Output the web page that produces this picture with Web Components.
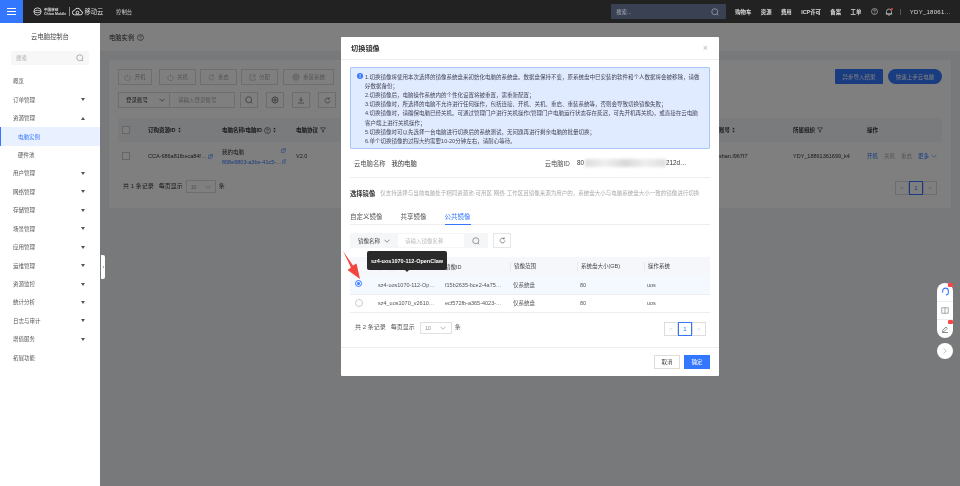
<!DOCTYPE html>
<html lang="zh-CN">
<head>
<meta charset="utf-8">
<title>切换镜像</title>
<style>
html, body { margin: 0; height: 100%; overflow: hidden; }
body { width: 960px; height: 486px; display: flex; flex-direction: column; font-family: "Liberation Sans", "Noto Sans CJK SC", sans-serif; color: #333; filter: blur(.2px); white-space: nowrap; }
.below { flex: 1; display: flex; min-height: 0; position: relative; }
</style>
</head>
<body>
<app-header></app-header>
<div class="below">
  <side-nav></side-nav>
  <instance-page></instance-page>
  <switch-image-dialog></switch-image-dialog>
  <float-tools></float-tools>
  <nav-handle></nav-handle>
</div>
<script>
(function() {
  'use strict';
  const icons = {
    search: '<svg width="8" height="8" viewBox="0 0 16 16" fill="none" stroke="currentColor" stroke-width="1.3"><circle cx="7.5" cy="7.5" r="6"/><path d="M12 12l2.5 2.5"/></svg>',
    chevron: '<svg width="6" height="4" viewBox="0 0 12 8" fill="none" stroke="currentColor" stroke-width="1.2"><path d="M1 1.5l5 5 5-5"/></svg>',
    caret: '<svg width="4" height="3" viewBox="0 0 8 6" fill="currentColor"><path d="M0 0h8L4 6z"/></svg>',
    power: '<svg width="7" height="7" viewBox="0 0 16 16" fill="none" stroke="currentColor" stroke-width="1.3"><path d="M5 3.2a6.3 6.3 0 1 0 6 0M8 1v6"/></svg>',
    share: '<svg width="7" height="7" viewBox="0 0 16 16" fill="none" stroke="currentColor" stroke-width="1.3"><path d="M8 2H2v12h12V8M7 9l7-7M10 2h4v4"/></svg>',
    restart: '<svg width="7" height="7" viewBox="0 0 16 16" fill="none" stroke="currentColor" stroke-width="1.3"><path d="M13.5 8a5.5 5.5 0 1 1-1.8-4M12 1v3.3H8.7"/></svg>',
    gear: '<svg width="8" height="8" viewBox="0 0 16 16" fill="none" stroke="currentColor" stroke-width="1.6"><circle cx="8" cy="8" r="2.3"/><path d="M8 1.5l5.6 3.2v6.6L8 14.5l-5.6-3.2V4.7z"/></svg>',
    download: '<svg width="8" height="8" viewBox="0 0 16 16" fill="none" stroke="currentColor" stroke-width="1.3"><path d="M8 2v8M4.5 7L8 10.5 11.5 7M2 14h12"/></svg>',
    copy: '<svg width="5" height="5" viewBox="0 0 12 12" fill="none" stroke="currentColor" stroke-width="1.3"><path d="M4 1h7v7M1 4h6.5v7H1z"/></svg>',
    sort: '<svg width="3" height="6" viewBox="0 0 6 12" fill="currentColor"><path d="M3 1l2.5 3.5h-5zM3 11L.5 7.5h5z"/></svg>',
    filter: '<svg width="6" height="6" viewBox="0 0 12 12" fill="none" stroke="currentColor" stroke-width="1.1"><path d="M1 1.5h10L7 6.5v4l-2-1v-3z"/></svg>',
    help: '<svg width="7" height="7" viewBox="0 0 16 16" fill="none" stroke="currentColor" stroke-width="1.3"><circle cx="8" cy="8" r="6.8"/><path d="M6 6.3a2 2 0 1 1 3 1.7c-.7.4-1 .8-1 1.6M8 11.2v1.3"/></svg>'
  };

  const define = (name, css, html) => customElements.define(name, class extends HTMLElement {
    constructor() {
      super();
      this.attachShadow({mode: 'open'}).innerHTML = `<style>${css}</style>${html}`;
    }
  });

  define('app-header', `
    :host { display: flex; align-items: center; height: 23px; background: #222; color: #d8d8d8; font-size: 5.4px; flex: none; }
    .burger { width: 23px; height: 23px; flex: none; background: #37f; display: flex; flex-direction: column; justify-content: center; align-items: center; gap: 2px; }
    .burger i { width: 9px; height: 1px; background: #fff; }
    .logo { margin-left: 10px; display: flex; align-items: center; color: #ddd; width: 83px; flex: none; }
    .logo b { font-weight: 400; }
    .cm { font-size: 3.6px; line-height: 4px; margin: 0 1px 0 2px; font-weight: 600; }
    .sep { width: 1px; height: 9px; background: #888; margin: 0 2px; }
    .yun { font-size: 6.3px; margin-left: 1px; }
    .console { color: #ccc; flex: none; }
    .search { margin-left: 479px; width: 115px; height: 15px; background: #3a4152; border-radius: 1px; display: flex; align-items: center; justify-content: space-between; padding: 0 7px 0 5px; box-sizing: border-box; color: #aeb4c0; flex: none; }
    nav { display: flex; align-items: center; margin-left: 9px; color: #ddd; gap: 9.4px; font-weight: 600; flex: none; }
    .dot { position: relative; display: flex; }
    .dot::after { content: ''; position: absolute; right: 0; top: 0; width: 2px; height: 2px; border-radius: 50%; background: #f33; }
    .bar { width: 1px; height: 6px; background: #555; margin-left: -2px; }
    .user { margin-left: -1px; font-size: 6px; letter-spacing: .25px; font-weight: 400; }
  `, `
    <div class="burger"><i></i><i></i><i></i></div>
    <div class="logo">
      <svg width="9" height="9" viewBox="0 0 16 16" fill="none" stroke="#ddd" stroke-width="1.5"><circle cx="8" cy="8" r="6.5"/><path d="M2 8c3-3 9-3 12 0M2 8c3 3 9 3 12 0"/></svg>
      <span class="cm">中国移动<br>China Mobile</span><span class="sep"></span>
      <svg width="11" height="9" viewBox="0 0 20 16" fill="none" stroke="#ddd" stroke-width="1.8"><path d="M5 14a4 4 0 0 1-.5-8A6 6 0 0 1 16 7a3.5 3.5 0 0 1-1 7z"/><circle cx="10" cy="10" r="2.5"/></svg>
      <b class="yun">移动云</b>
    </div>
    <span class="console">控制台</span>
    <div class="search"><span>搜索...</span>${icons.search}</div>
    <nav>
      <span>购物车</span><span>资源</span><span>费用</span><span>ICP许可</span><span>备案</span><span>工单</span>
      <span style="display:flex">${icons.help}</span>
      <span class="dot" style="margin-left:-2px"><svg width="8" height="8" viewBox="0 0 16 16" fill="none" stroke="currentColor" stroke-width="1.3"><path d="M3 12V7a5 5 0 0 1 10 0v5zM1.5 12h13M6.5 14.5h3"/></svg></span>
      <span class="bar"></span><span class="user">YDY_18061…</span>
    </nav>
  `);

  const navRows = [['概览', 0], ['订单管理', 1], ['资源管理', 2], ['电脑实例', 3], ['硬件池', 4], ['用户管理', 1], ['网络管理', 1], ['存储管理', 1], ['场景管理', 1], ['应用管理', 1], ['运维管理', 1], ['资源监控', 1], ['统计分析', 1], ['日志与审计', 1], ['增值服务', 1], ['拓展功能', 0]];
  define('side-nav', `
    :host { display: block; width: 100px; flex: none; background: #fff; color: #555; font-size: 5.5px; }
    h1 { margin: 0; padding-top: 10px; box-sizing: border-box; line-height: 8px; text-align: center; font-weight: 400; font-size: 6.3px; color: #444; height: 28px; }
    .search { margin: 0 11px 7px; height: 14px; background: #f7f7f7; display: flex; align-items: center; justify-content: space-between; padding: 0 5px; color: #aaa; }
    .search svg { color: #888; }
    .row { height: 18.45px; display: flex; align-items: center; justify-content: space-between; padding: 0 15px 0 13px; box-sizing: border-box; }
    .row svg { color: #555; }
    .row.sub { padding-left: 18px; }
    .row.on { background: #e9f0ff; color: #37f; border-left: 1px solid #37f; padding-left: 17px; }
    .up svg { transform: rotate(180deg); }
  `, `
    <h1>云电脑控制台</h1>
    <div class="search"><span>搜索</span>${icons.search}</div>
    ${navRows.map(([t, k]) => `<div class="row${k === 3 ? ' sub on' : k === 4 ? ' sub' : k === 2 ? ' up' : ''}"><span>${t}</span>${k === 1 || k === 2 ? icons.caret : ''}</div>`).join('')}
  `);

  define('instance-page', `
    :host { display: block; flex: 1; background: #f0f2f5; font-size: 5.5px; color: #333; min-width: 0; }
    .crumb { height: 28px; background: #fff; display: flex; align-items: center; gap: 3px; padding-left: 9px; font-size: 6.3px; }
    .card { margin: 9px 9px 0; height: 148px; background: #fff; padding: 9px; box-sizing: border-box; }
    .tools { display: flex; height: 16px; justify-content: space-between; }
    .btns { display: flex; gap: 4px; }
    .btn { border: .5px solid #ddd; display: flex; align-items: center; justify-content: center; gap: 3px; box-sizing: border-box; color: #aaa; height: 16px; }
    .go { background: #37f; color: #fff; height: 15px; display: flex; align-items: center; justify-content: center; }
    .filter { display: flex; margin-top: 7px; height: 16px; }
    .sel { width: 51px; border: .5px solid #ddd; border-right: 0; display: flex; align-items: center; justify-content: space-between; padding: 0 4px 0 7px; box-sizing: border-box; }
    .inp { width: 66px; border: .5px solid #ddd; padding-left: 8px; box-sizing: border-box; line-height: 15px; color: #aaa; }
    .sq { width: 18px; border: .5px solid #ddd; display: flex; align-items: center; justify-content: center; box-sizing: border-box; color: #555; }
    .head, .row { display: grid; grid-template-columns: 30px 74px 74px 423px 74px 74px 1fr; align-items: center; }
    .head { margin-top: 10px; height: 24px; background: #f5f7fa; font-weight: 600; }
    .head span, .row > span { display: flex; align-items: center; gap: 2px; white-space: nowrap; }
    .row { height: 28px; }
    .box { width: 6px; height: 6px; border: .5px solid #ccc; margin-left: 4px; background: #fff; }
    .blue { color: #37f; }
    .two { flex-direction: column; align-items: flex-start !important; gap: 3px !important; }
    .two div { display: flex; width: 64px; justify-content: space-between; }
    .pager { display: flex; align-items: flex-start; line-height: 12px; margin: 10px 0 0 5px; gap: 3px; font-size: 6px; }
    .psel { width: 30px; height: 13px; border: .5px solid #ddd; display: flex; align-items: center; justify-content: space-around; box-sizing: border-box; font-size: 5px; color: #999; }
    .pages { margin: 1px 5px 0 auto; display: flex; color: #bbb; }
    .pages span { width: 14px; height: 14px; border: .5px solid #ddd; display: flex; align-items: center; justify-content: center; box-sizing: border-box; }
    .pages .cur { border: 1px solid #37f; color: #37f; font-size: 6px; }
  `, `
    <div class="crumb">电脑实例 ${icons.help}</div>
    <div class="card">
      <div class="tools">
        <div class="btns">
          <span class="btn" style="width:34px">${icons.power}开机</span>
          <span class="btn" style="width:37px;margin-left:3px">${icons.power}关机</span>
          <span class="btn" style="width:37px">${icons.restart}重启</span>
          <span class="btn" style="width:37px">${icons.share}分配</span>
          <span class="btn" style="width:51px;margin-left:1px">${icons.gear}重装系统</span>
        </div>
        <div class="btns" style="gap:5px">
          <span class="go" style="width:48px;border-radius:1px">异步导入结果</span>
          <span class="go" style="width:54px;border-radius:8px">快速上手云电脑</span>
        </div>
      </div>
      <div class="filter">
        <span class="sel">登录账号 ${icons.chevron}</span><span class="inp">请输入登录账号</span>
        <span class="sq" style="margin-left:5px">${icons.search}</span>
        <span class="sq" style="margin-left:8px">${icons.gear}</span>
        <span class="sq" style="margin-left:8px">${icons.download}</span>
        <span class="sq" style="margin-left:8px">${icons.restart}</span>
      </div>
      <div class="head">
        <span><i class="box"></i></span>
        <span>订购资源ID ${icons.sort}</span>
        <span>电脑名称/电脑ID ${icons.help} ${icons.sort}</span>
        <span>电脑协议 ${icons.filter}</span>
        <span>账号 ${icons.sort}</span>
        <span>所属组织 ${icons.filter}</span>
        <span>操作</span>
      </div>
      <div class="row">
        <span><i class="box"></i></span>
        <span>CCA-686a81fbeca84f… <span class="blue" style="display:flex">${icons.copy}</span></span>
        <span class="two"><div>我的电脑 <span class="blue">${icons.copy}</span></div><div class="blue">808e9803-a3be-41c5-… ${icons.copy}</div></span>
        <span>V2.0</span>
        <span>shan.l967f7</span>
        <span>YDY_18861361699_k4</span>
        <span style="gap:6px"><span class="blue">开机</span><span style="color:#aaa">关机</span><span style="color:#aaa">重启</span><span class="blue" style="display:flex;align-items:center;gap:2px">更多 ${icons.chevron}</span></span>
      </div>
      <div class="pager">共 1 条记录 <span style="margin-left:2px">每页显示</span> <span class="psel">10 ${icons.chevron}</span> 条
        <div class="pages"><span>&lt;</span><span class="cur">1</span><span>&gt;</span></div>
      </div>
    </div>
  `);

  const tips = [
    '1.切换镜像将使用本次选择的镜像系统盘来初始化电脑的系统盘。数据盘保持不变，原系统盘中已安装的软件和个人数据将会被移除，请做好数据备份；',
    '2.切换镜像后，电脑操作系统内的个性化设置将被重置，需重新配置；',
    '3.切换镜像时，所选择的电脑不允许进行任何操作，包括连接、开机、关机、重启、重装系统等，否则会导致切换镜像失败；',
    '4.切换镜像时，请确保电脑已经关机。可通过管理门户进行关机操作(管理门户电脑运行状态存在延迟，可先开机再关机)，或直接在云电脑客户端上进行关机操作；',
    '5.切换镜像时可以先选择一台电脑进行切换后的系统测试，无问题再进行剩余电脑的批量切换；',
    '6.单个切换镜像的过程大约需要10-20分钟左右，请耐心等待。'
  ];
  const rows = [
    ['sz4-uos1070-112-Op…', 'f15b2635-bce2-4a75…', '80', 'uos'],
    ['sz4_uos1070_v2610…', 'ecf572fb-a365-4023-…', '80', 'uos']
  ];
  define('switch-image-dialog', `
    :host { position: absolute; left: 100px; right: 0; top: 0; bottom: 0; background: rgba(0,0,0,.5); display: flex; justify-content: center; align-items: flex-start; padding-top: 14px; box-sizing: border-box; font-size: 5.5px; color: #444; }
    .modal { position: relative; width: 378px; height: 339px; background: #fff; border-radius: 1px; display: flex; flex-direction: column; }
    .title { height: 23px; border-bottom: 1px solid #eee; box-sizing: border-box; display: flex; align-items: center; justify-content: space-between; padding: 0 10px; font-size: 7.2px; font-weight: 600; color: #333; }
    .x { color: #bbb; font-size: 9px; font-weight: 400; margin-right: 1px; }
    .body { padding: 7px 9px 0; display: flex; flex-direction: column; flex: 1; }
    .alert { position: relative; height: 82px; background: #e0ebff; border: 1px solid #a9c6fb; border-radius: 1px; box-sizing: border-box; padding: 4.5px 6px 0 14px; line-height: 9.2px; color: #445; white-space: normal; }
    .alert p { margin: 0; }
    .badge { position: absolute; left: 6px; top: 5px; width: 6px; height: 6px; border-radius: 50%; background: #37f; color: #fff; font: 700 5px/6px "Liberation Sans", sans-serif; text-align: center; }
    .info { height: 29px; border-bottom: 1px solid #eee; box-sizing: border-box; display: flex; align-items: center; padding-left: 4px; font-size: 6.3px; color: #555; }
    .info b { font-weight: 400; color: #333; margin-left: 6px; }
    .info b.id { margin-left: 7px; }
    .mask { display: inline-block; width: 81px; height: 8px; margin-left: 1px; background: linear-gradient(90deg, #ddd, #efefef 25%, #d8d8d8 50%, #eee 75%, #ddd); filter: blur(1.5px); vertical-align: middle; }
    .pick { display: flex; align-items: center; gap: 5px; height: 22px; padding-top: 8px; box-sizing: border-box; }
    .pick b { font-size: 6.3px; font-weight: 600; color: #333; }
    .pick span { color: #aaa; white-space: nowrap; font-size: 5.5px; }
    .tabs { display: flex; gap: 18px; margin-top: 3px; height: 22px; border-bottom: 1px solid #eee; box-sizing: border-box; font-size: 6.5px; line-height: 27px; color: #555; }
    .tabs .on { color: #37f; border-bottom: 1px solid #37f; height: 22px; box-sizing: border-box; }
    .find { display: flex; margin-top: 8px; height: 15px; }
    .kind { width: 48px; background: #f5f6f8; display: flex; align-items: center; justify-content: center; gap: 4px; color: #444; }
    .q { width: 66px; padding-left: 7px; box-sizing: border-box; line-height: 15px; color: #bbb; border-top: 1px solid #f5f6f8; border-bottom: 1px solid #f5f6f8; }
    .go { width: 24px; background: #f5f6f8; display: flex; align-items: center; justify-content: center; color: #666; }
    .re { width: 18px; margin-left: 5px; border: 1px solid #e6e6e6; box-sizing: border-box; display: flex; align-items: center; justify-content: center; color: #444; }
    .thead, .tr { display: grid; grid-template-columns: 28px 67px 68px 67px 67px 1fr; align-items: center; }
    .thead { margin-top: 9px; height: 19px; background: #f5f7fa; color: #444; }
    .tr { height: 18.5px; border-bottom: .5px solid #eee; box-sizing: border-box; color: #555; }
    .tr.on { background: #f4f8ff; }
    .thead span:nth-child(n+4) { border-left: .5px solid #e8e8e8; padding-left: 3px; margin-left: -3px; line-height: 9px; }
    .radio { display: block; width: 6px; height: 6px; border-radius: 50%; border: .5px solid #ccc; margin-left: 5px; }
    .on .radio { border: 1px solid #37f; width: 5px; height: 5px; position: relative; margin-top: -3px; }
    .on .radio::after { content: ''; position: absolute; inset: 1px; border-radius: 50%; background: #37f; }
    .foot { display: flex; align-items: flex-start; line-height: 11px; height: 14px; margin: 9px 4px 0 5px; gap: 3px; font-size: 6px; color: #555; }
    .psel { width: 32px; height: 12px; border: .5px solid #e0e0e0; display: flex; align-items: center; justify-content: space-around; box-sizing: border-box; font-size: 5px; color: #888; margin-left: 2px; }
    .pages { margin-left: auto; display: flex; color: #ccc; }
    .pages span { width: 14px; height: 14px; border: .5px solid #ddd; display: flex; align-items: center; justify-content: center; box-sizing: border-box; }
    .pages .cur { border: 1px solid #37f; color: #37f; font-size: 6px; }
    .act { height: 29px; border-top: 1px solid #eee; box-sizing: border-box; display: flex; justify-content: flex-end; gap: 4px; padding: 7px 9px 0 0; }
    .act span { width: 26px; height: 14px; border: .5px solid #ddd; box-sizing: border-box; display: flex; align-items: center; justify-content: center; }
    .act .ok { background: #37f; border-color: #37f; color: #fff; }
    .tip { position: absolute; left: 26px; top: 214px; width: 80px; height: 19px; background: #2a2a2a; border-radius: 2px; color: #fff; font-weight: 700; display: flex; align-items: center; justify-content: center; }
    .tip::after { content: ''; position: absolute; left: 38px; top: 19px; border: 2px solid transparent; border-top-color: #2a2a2a; }
    .arrow { position: absolute; left: 1px; top: 213px; }
  `, `
    <div class="modal">
      <div class="title"><span>切换镜像</span><span class="x">×</span></div>
      <div class="body">
        <div class="alert"><i class="badge">!</i>${tips.map(t => `<p>${t}</p>`).join('')}</div>
        <div class="info"><span>云电脑名称</span><b>我的电脑</b><span style="margin-left:128px">云电脑ID</span><b class="id">80<i class="mask"></i>212d…</b></div>
        <div class="pick"><b>选择镜像</b><span>仅支持选择与当前电脑处于相同资源池·可用区·网络·工作区且镜像来源为用户的，系统盘大小与电脑系统盘大小一致的镜像进行切换</span></div>
        <div class="tabs"><span>自定义镜像</span><span>共享镜像</span><span class="on">公共镜像</span></div>
        <div class="find"><span class="kind">镜像名称 ${icons.chevron}</span><span class="q">请输入镜像名称</span><span class="go">${icons.search}</span><span class="re">${icons.restart}</span></div>
        <div class="thead"><span></span><span>镜像名称</span><span>镜像ID</span><span>镜像范围</span><span>系统盘大小(GB)</span><span>操作系统</span></div>
        ${rows.map((r, i) => `<div class="tr${i ? '' : ' on'}"><span><i class="radio"></i></span><span>${r[0]}</span><span>${r[1]}</span><span>仅系统盘</span><span>${r[2]}</span><span>${r[3]}</span></div>`).join('')}
        <div class="foot">共 2 条记录 <span style="margin-left:2px">每页显示</span> <span class="psel">10 ${icons.chevron}</span> 条
          <div class="pages"><span>&lt;</span><span class="cur">1</span><span>&gt;</span></div>
        </div>
      </div>
      <div class="act"><span>取消</span><span class="ok">确定</span></div>
      <div class="tip">sz4-uos1070-112-OpenClaw</div>
      <svg class="arrow" width="18" height="32" viewBox="0 0 18 32"><path d="M1 1L11 15.5 14.5 13.5 18 29 5.5 20 9 17.5z" fill="#f2453d"/></svg>
    </div>
  `);

  define('float-tools', `
    :host { position: absolute; left: 937px; top: 260px; width: 16px; display: flex; flex-direction: column; gap: 5px; }
    .pill { background: #fff; border-radius: 8px; height: 55px; display: flex; flex-direction: column; color: #777; }
    .pill span { flex: 1; display: flex; align-items: center; justify-content: center; position: relative; border-bottom: .5px solid #eee; }
    .pill span:last-child { border: 0; }
    .red::after { content: ''; position: absolute; right: 0; top: 0; width: 5px; height: 4px; background: #f44; border-radius: 1px; }
    .round { width: 16px; height: 16px; border-radius: 50%; background: #fff; display: flex; align-items: center; justify-content: center; color: #999; }
  `, `
    <div class="pill">
      <span class="red"><svg width="9" height="9" viewBox="0 0 16 16" fill="none" stroke="#37f" stroke-width="1.8"><path d="M3 10V7a5 5 0 0 1 10 0v3M13 10a4 4 0 0 1-4 4"/></svg></span>
      <span><svg width="8" height="7" viewBox="0 0 16 14" fill="none" stroke="currentColor" stroke-width="1.3"><path d="M1.5 1.5h13v11h-13zM8 1.5v11"/></svg></span>
      <span class="red"><svg width="8" height="8" viewBox="0 0 16 16" fill="none" stroke="#666" stroke-width="1.5"><path d="M3 11l7-7 2.5 2.5-7 7H3zM2 15h12"/></svg></span>
    </div>
    <div class="round"><svg width="4" height="6" viewBox="0 0 8 12" fill="none" stroke="currentColor" stroke-width="1.3"><path d="M1.5 1l5 5-5 5"/></svg></div>
  `);

  define('nav-handle', `
    :host { position: absolute; left: 101px; top: 232px; width: 4px; height: 24px; background: #fff; border-radius: 0 2px 2px 0; display: flex; align-items: center; justify-content: center; }
    i { border: 1.5px solid transparent; border-right-color: #555; border-left: 0; }
  `, '<i></i>');
}());
</script>
</body>
</html>
